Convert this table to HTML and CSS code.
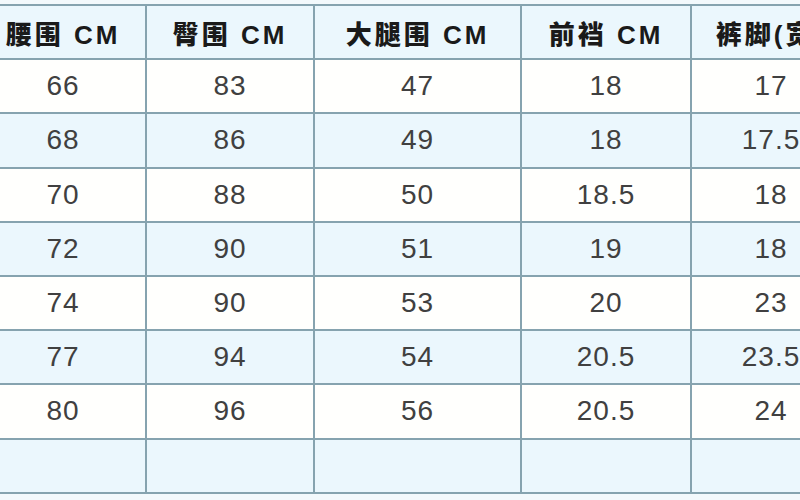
FILE: index.html
```html
<!DOCTYPE html>
<html lang="zh">
<head>
<meta charset="utf-8">
<title>尺码表</title>
<link rel="stylesheet" href="styles.css">
</head>
<body>
<div class="wrap">
<table class="size">
<colgroup>
<col class="c1"><col class="c2"><col class="c3"><col class="c4"><col class="c5">
</colgroup>
<thead>
<tr class="alt"><th>腰围 CM</th><th>臀围 CM</th><th>大腿围 CM</th><th>前裆 CM</th><th>裤脚(宽)</th></tr>
</thead>
<tbody>
<tr><td>66</td><td>83</td><td>47</td><td>18</td><td>17</td></tr>
<tr class="alt"><td>68</td><td>86</td><td>49</td><td>18</td><td>17.5</td></tr>
<tr><td>70</td><td>88</td><td>50</td><td>18.5</td><td>18</td></tr>
<tr class="alt"><td>72</td><td>90</td><td>51</td><td>19</td><td>18</td></tr>
<tr><td>74</td><td>90</td><td>53</td><td>20</td><td>23</td></tr>
<tr class="alt"><td>77</td><td>94</td><td>54</td><td>20.5</td><td>23.5</td></tr>
<tr><td>80</td><td>96</td><td>56</td><td>20.5</td><td>24</td></tr>
<tr class="alt"><td></td><td></td><td></td><td></td><td></td></tr>
</tbody>
</table>
</div>
</body>
</html>
```

FILE: styles.css
```css
html, body {
  margin: 0;
  padding: 0;
  background: #f3f9fc;
  overflow: hidden;
  width: 800px;
  height: 500px;
}

.wrap {
  padding-top: 4px;
  margin-left: -21px;
}

.size {
  border-collapse: collapse;
  table-layout: fixed;
  width: 871px;
}

.c1 { width: 166px; }
.c2 { width: 168px; }
.c3 { width: 207px; }
.c4 { width: 170px; }
.c5 { width: 160px; }

.size tr {
  height: 54.2px;
  background: #fffffd;
}

.size tr.alt {
  background: #ebf7fd;
}

.size th,
.size td {
  border: 2px solid #86a3af;
  text-align: center;
  vertical-align: middle;
  padding: 0;
  white-space: nowrap;
  overflow: hidden;
}

.size th {
  font-family: "Liberation Sans", "Noto Sans CJK SC", sans-serif;
  font-weight: 900;
  font-size: 26px;
  letter-spacing: 3px;
  color: #1a1a1a;
}

.size td {
  font-family: "Liberation Sans", Arial, sans-serif;
  font-size: 28px;
  letter-spacing: 1px;
  color: #404040;
}
```
